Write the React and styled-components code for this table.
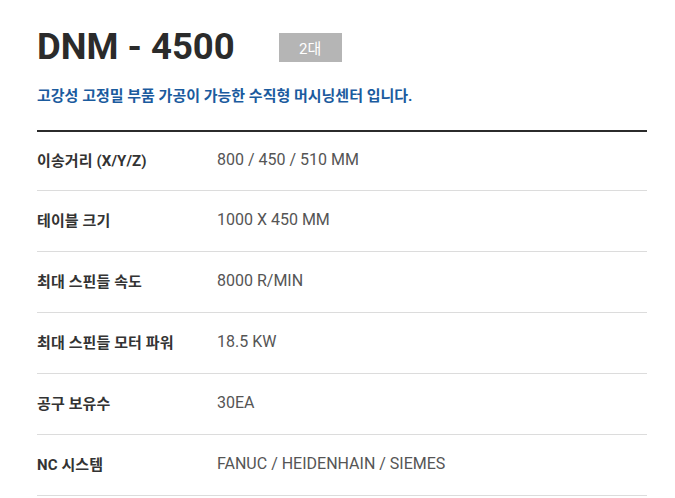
import React from 'react'
import styled, { createGlobalStyle } from 'styled-components'

const GlobalStyle = createGlobalStyle`
  body {
    margin: 0;
    background: #fff;
    font-family: Roboto, "Noto Sans CJK KR", sans-serif;
  }
`

const Wrapper = styled.div`
  width: 610px;
  padding: 27px 0 0 37px;
`

const TitleRow = styled.div`
  display: flex;
  align-items: center;
  gap: 44px;
`

const Title = styled.h1`
  margin: 0;
  font-size: 36.5px;
  font-weight: 700;
  color: #2b2b2b;
  line-height: 40px;
`

const Badge = styled.span`
  display: inline-flex;
  align-items: center;
  justify-content: center;
  width: 63px;
  height: 29px;
  background: #b5b5b5;
  color: #fff;
  font-size: 15px;
  margin-top: 1px;
`

const Subtitle = styled.p`
  margin: 19px 0 0;
  font-size: 15px;
  font-weight: 700;
  color: #1b5b9e;
  line-height: 20px;
`

const SpecTable = styled.div`
  margin-top: 24px;
  border-top: 2px solid #2b2b2b;
`

const Row = styled.div`
  display: grid;
  grid-template-columns: 180px 1fr;
  align-items: center;
  height: ${({ $first }) => ($first ? '54px' : '56px')};
  padding-bottom: 4px;
  border-bottom: 1px solid #dcdcdc;
`

const Label = styled.div`
  font-size: 15px;
  font-weight: 700;
  color: #333;
  letter-spacing: 0.1px;
`

const Value = styled.div`
  font-size: 16px;
  color: #555;
`

const specs = [
  ['이송거리 (X/Y/Z)', '800 / 450 / 510 MM'],
  ['테이블 크기', '1000 X 450 MM'],
  ['최대 스핀들 속도', '8000 R/MIN'],
  ['최대 스핀들 모터 파워', '18.5 KW'],
  ['공구 보유수', '30EA'],
  ['NC 시스템', 'FANUC / HEIDENHAIN / SIEMES'],
]

export default function App() {
  return (
    <>
      <GlobalStyle />
      <Wrapper>
        <TitleRow>
          <Title>DNM - 4500</Title>
          <Badge>2대</Badge>
        </TitleRow>
        <Subtitle>고강성 고정밀 부품 가공이 가능한 수직형 머시닝센터 입니다.</Subtitle>
        <SpecTable>
          {specs.map(([label, value], i) => (
            <Row key={label} $first={i === 0}>
              <Label>{label}</Label>
              <Value>{value}</Value>
            </Row>
          ))}
        </SpecTable>
      </Wrapper>
    </>
  )
}
